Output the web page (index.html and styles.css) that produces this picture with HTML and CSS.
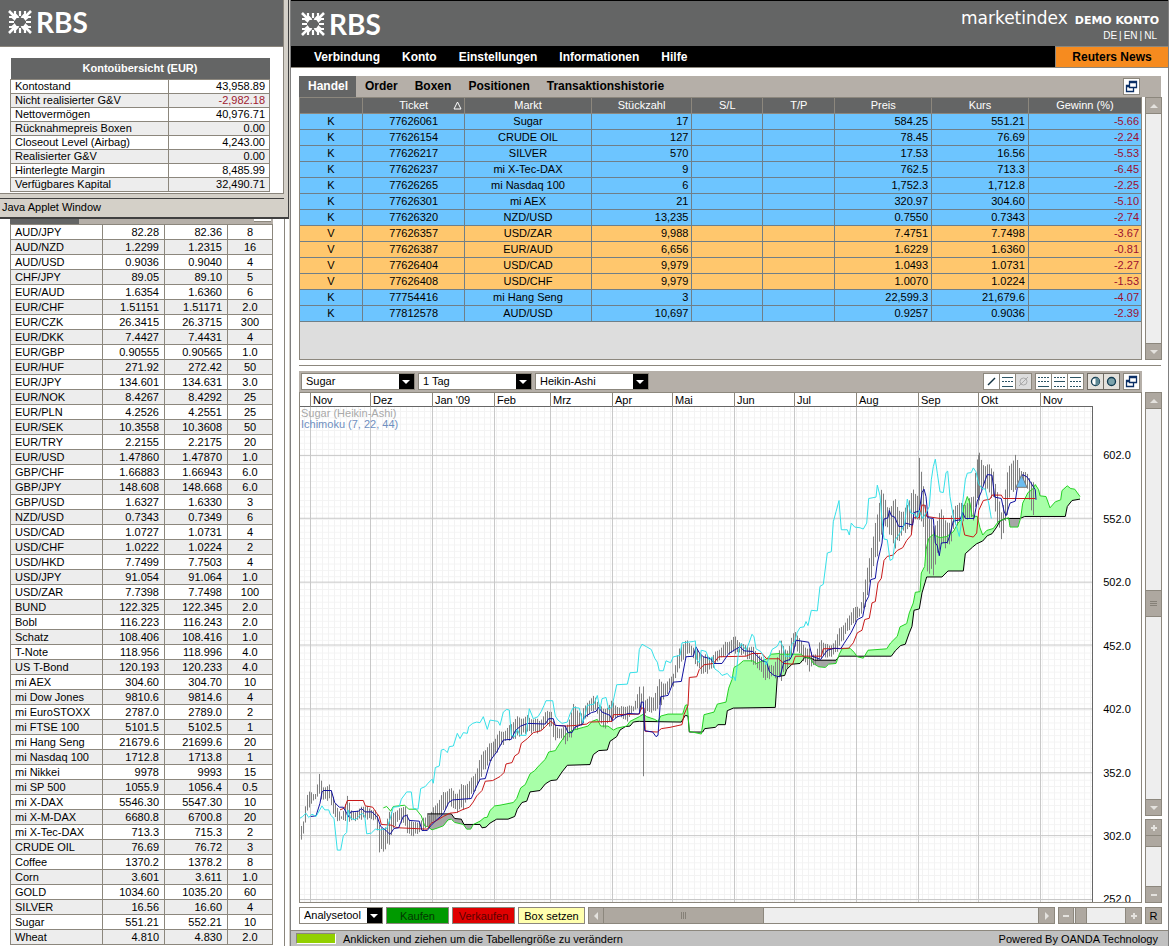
FILE: index.html
```html
<!DOCTYPE html>
<html lang="de">
<head>
<meta charset="utf-8">
<title>RBS marketindex</title>
<link rel="stylesheet" href="styles.css">
</head>
<body>
<svg class="defs" width="0" height="0" aria-hidden="true">
  <symbol id="daisy" viewBox="0 0 24 24">
    <g id="petals" fill="none" stroke="#fff" stroke-width="2.6">
      <path d="M1 1 8.500 8.500M23 1 15.500 8.500M1 23 8.500 15.500M23 23 15.500 15.500"/>
      <path d="M7 1V4L10.500 8M17 1V4L13.500 8M12 1V6M7 23V20L10.500 16M17 23V20L13.500 16M12 23V18" stroke-width="2.200"/>
      <path d="M1 7H4L8 10.500M1 17H4L8 13.500M1 12H6M23 7H20L16 10.500M23 17H20L16 13.500M23 12H18" stroke-width="2.200"/>
    </g>
    <path d="M9 8h6l2 2v4l-2 2H9l-2-2v-4z" fill="#646565"/>
  </symbol>
  <symbol id="windows" viewBox="0 0 15 15">
    <path d="M5.500 2.500h7v6h-7zM5 3.500h8M5 6.500H2.500v6h7V9M2 7.500h3" fill="none" stroke="#0b2f66" stroke-width="1.300"/>
  </symbol>
</svg>

<aside class="side">
  <section class="popup">
    <header class="brand"><svg class="daisy"><use href="#daisy"/></svg><span class="brand-name">RBS</span></header>
    <div class="popup-body">
      <table class="account">
        <colgroup><col><col class="amount"></colgroup>
        <thead><tr><th colspan="2">Kontoübersicht (EUR)</th></tr></thead>
        <tbody>
        <tr><td>Kontostand</td><td>43,958.89</td></tr>
        <tr><td>Nicht realisierter G&amp;V</td><td class="loss">-2,982.18</td></tr>
        <tr><td>Nettovermögen</td><td>40,976.71</td></tr>
        <tr><td>Rücknahmepreis Boxen</td><td>0.00</td></tr>
        <tr><td>Closeout Level (Airbag)</td><td>4,243.00</td></tr>
        <tr><td>Realisierter G&amp;V</td><td>0.00</td></tr>
        <tr><td>Hinterlegte Margin</td><td>8,485.99</td></tr>
        <tr><td>Verfügbares Kapital</td><td>32,490.71</td></tr>
        </tbody>
      </table>
    </div>
    <footer class="applet">Java Applet Window</footer>
  </section>
  <section class="quotes-window">
    <div class="quotes-strip"><span></span><i></i></div>
    <table class="quotes">
      <colgroup><col class="q-name"><col class="q-bid"><col class="q-ask"><col class="q-spread"></colgroup>
      <tbody>
      <tr><td>AUD/JPY</td><td>82.28</td><td>82.36</td><td>8</td></tr>
      <tr><td>AUD/NZD</td><td>1.2299</td><td>1.2315</td><td>16</td></tr>
      <tr><td>AUD/USD</td><td>0.9036</td><td>0.9040</td><td>4</td></tr>
      <tr><td>CHF/JPY</td><td>89.05</td><td>89.10</td><td>5</td></tr>
      <tr><td>EUR/AUD</td><td>1.6354</td><td>1.6360</td><td>6</td></tr>
      <tr><td>EUR/CHF</td><td>1.51151</td><td>1.51171</td><td>2.0</td></tr>
      <tr><td>EUR/CZK</td><td>26.3415</td><td>26.3715</td><td>300</td></tr>
      <tr><td>EUR/DKK</td><td>7.4427</td><td>7.4431</td><td>4</td></tr>
      <tr><td>EUR/GBP</td><td>0.90555</td><td>0.90565</td><td>1.0</td></tr>
      <tr><td>EUR/HUF</td><td>271.92</td><td>272.42</td><td>50</td></tr>
      <tr><td>EUR/JPY</td><td>134.601</td><td>134.631</td><td>3.0</td></tr>
      <tr><td>EUR/NOK</td><td>8.4267</td><td>8.4292</td><td>25</td></tr>
      <tr><td>EUR/PLN</td><td>4.2526</td><td>4.2551</td><td>25</td></tr>
      <tr><td>EUR/SEK</td><td>10.3558</td><td>10.3608</td><td>50</td></tr>
      <tr><td>EUR/TRY</td><td>2.2155</td><td>2.2175</td><td>20</td></tr>
      <tr><td>EUR/USD</td><td>1.47860</td><td>1.47870</td><td>1.0</td></tr>
      <tr><td>GBP/CHF</td><td>1.66883</td><td>1.66943</td><td>6.0</td></tr>
      <tr><td>GBP/JPY</td><td>148.608</td><td>148.668</td><td>6.0</td></tr>
      <tr><td>GBP/USD</td><td>1.6327</td><td>1.6330</td><td>3</td></tr>
      <tr><td>NZD/USD</td><td>0.7343</td><td>0.7349</td><td>6</td></tr>
      <tr><td>USD/CAD</td><td>1.0727</td><td>1.0731</td><td>4</td></tr>
      <tr><td>USD/CHF</td><td>1.0222</td><td>1.0224</td><td>2</td></tr>
      <tr><td>USD/HKD</td><td>7.7499</td><td>7.7503</td><td>4</td></tr>
      <tr><td>USD/JPY</td><td>91.054</td><td>91.064</td><td>1.0</td></tr>
      <tr><td>USD/ZAR</td><td>7.7398</td><td>7.7498</td><td>100</td></tr>
      <tr><td>BUND</td><td>122.325</td><td>122.345</td><td>2.0</td></tr>
      <tr><td>Bobl</td><td>116.223</td><td>116.243</td><td>2.0</td></tr>
      <tr><td>Schatz</td><td>108.406</td><td>108.416</td><td>1.0</td></tr>
      <tr><td>T-Note</td><td>118.956</td><td>118.996</td><td>4.0</td></tr>
      <tr><td>US T-Bond</td><td>120.193</td><td>120.233</td><td>4.0</td></tr>
      <tr><td>mi AEX</td><td>304.60</td><td>304.70</td><td>10</td></tr>
      <tr><td>mi Dow Jones</td><td>9810.6</td><td>9814.6</td><td>4</td></tr>
      <tr><td>mi EuroSTOXX</td><td>2787.0</td><td>2789.0</td><td>2</td></tr>
      <tr><td>mi FTSE 100</td><td>5101.5</td><td>5102.5</td><td>1</td></tr>
      <tr><td>mi Hang Seng</td><td>21679.6</td><td>21699.6</td><td>20</td></tr>
      <tr><td>mi Nasdaq 100</td><td>1712.8</td><td>1713.8</td><td>1</td></tr>
      <tr><td>mi Nikkei</td><td>9978</td><td>9993</td><td>15</td></tr>
      <tr><td>mi SP 500</td><td>1055.9</td><td>1056.4</td><td>0.5</td></tr>
      <tr><td>mi X-DAX</td><td>5546.30</td><td>5547.30</td><td>10</td></tr>
      <tr><td>mi X-M-DAX</td><td>6680.8</td><td>6700.8</td><td>20</td></tr>
      <tr><td>mi X-Tec-DAX</td><td>713.3</td><td>715.3</td><td>2</td></tr>
      <tr><td>CRUDE OIL</td><td>76.69</td><td>76.72</td><td>3</td></tr>
      <tr><td>Coffee</td><td>1370.2</td><td>1378.2</td><td>8</td></tr>
      <tr><td>Corn</td><td>3.601</td><td>3.611</td><td>1.0</td></tr>
      <tr><td>GOLD</td><td>1034.60</td><td>1035.20</td><td>60</td></tr>
      <tr><td>SILVER</td><td>16.56</td><td>16.60</td><td>4</td></tr>
      <tr><td>Sugar</td><td>551.21</td><td>552.21</td><td>10</td></tr>
      <tr><td>Wheat</td><td>4.810</td><td>4.830</td><td>2.0</td></tr>
      </tbody>
    </table>
  </section>
</aside>

<main class="main">
  <header class="top">
    <div class="brand"><svg class="daisy"><use href="#daisy"/></svg><span class="brand-name">RBS</span></div>
    <div class="product">
      <div class="product-line"><span class="product-name">marketindex</span><strong>DEMO KONTO</strong></div>
      <nav class="langs"><a href="#">DE</a>|<a href="#">EN</a>|<a href="#">NL</a></nav>
    </div>
  </header>
  <nav class="menu">
    <button>Verbindung</button><button>Konto</button><button>Einstellungen</button><button>Informationen</button><button>Hilfe</button>
    <button class="news">Reuters News</button>
  </nav>

  <div class="work">
    <div class="tabs">
      <button class="tab on">Handel</button><button class="tab">Order</button><button class="tab">Boxen</button><button class="tab">Positionen</button><button class="tab">Transaktionshistorie</button>
      <button class="tool detach" aria-label="Fenster lösen"><svg><use href="#windows"/></svg></button>
    </div>
    <div class="trades-row">
      <div class="trades-box">
        <table class="trades">
          <colgroup><col class="c1"><col class="c2"><col class="c3"><col class="c4"><col class="c5"><col class="c6"><col class="c7"><col class="c8"><col class="c9"></colgroup>
          <thead><tr><th></th><th class="sorted"><span>Ticket</span><svg width="9" height="9" viewBox="0 0 9 9"><path d="M4.500 1 8 8H1z" fill="none" stroke="#fff"/></svg></th><th>Markt</th><th>Stückzahl</th><th>S/L</th><th>T/P</th><th>Preis</th><th>Kurs</th><th>Gewinn (%)</th></tr></thead>
          <tbody>
          <tr><td>K</td><td>77626061</td><td>Sugar</td><td>17</td><td></td><td></td><td>584.25</td><td>551.21</td><td>-5.66</td></tr>
          <tr><td>K</td><td>77626154</td><td>CRUDE OIL</td><td>127</td><td></td><td></td><td>78.45</td><td>76.69</td><td>-2.24</td></tr>
          <tr><td>K</td><td>77626217</td><td>SILVER</td><td>570</td><td></td><td></td><td>17.53</td><td>16.56</td><td>-5.53</td></tr>
          <tr><td>K</td><td>77626237</td><td>mi X-Tec-DAX</td><td>9</td><td></td><td></td><td>762.5</td><td>713.3</td><td>-6.45</td></tr>
          <tr><td>K</td><td>77626265</td><td>mi Nasdaq 100</td><td>6</td><td></td><td></td><td>1,752.3</td><td>1,712.8</td><td>-2.25</td></tr>
          <tr><td>K</td><td>77626301</td><td>mi AEX</td><td>21</td><td></td><td></td><td>320.97</td><td>304.60</td><td>-5.10</td></tr>
          <tr><td>K</td><td>77626320</td><td>NZD/USD</td><td>13,235</td><td></td><td></td><td>0.7550</td><td>0.7343</td><td>-2.74</td></tr>
          <tr class="sell"><td>V</td><td>77626357</td><td>USD/ZAR</td><td>9,988</td><td></td><td></td><td>7.4751</td><td>7.7498</td><td>-3.67</td></tr>
          <tr class="sell"><td>V</td><td>77626387</td><td>EUR/AUD</td><td>6,656</td><td></td><td></td><td>1.6229</td><td>1.6360</td><td>-0.81</td></tr>
          <tr class="sell"><td>V</td><td>77626404</td><td>USD/CAD</td><td>9,979</td><td></td><td></td><td>1.0493</td><td>1.0731</td><td>-2.27</td></tr>
          <tr class="sell"><td>V</td><td>77626408</td><td>USD/CHF</td><td>9,979</td><td></td><td></td><td>1.0070</td><td>1.0224</td><td>-1.53</td></tr>
          <tr><td>K</td><td>77754416</td><td>mi Hang Seng</td><td>3</td><td></td><td></td><td>22,599.3</td><td>21,679.6</td><td>-4.07</td></tr>
          <tr><td>K</td><td>77812578</td><td>AUD/USD</td><td>10,697</td><td></td><td></td><td>0.9257</td><td>0.9036</td><td>-2.39</td></tr>
          </tbody>
        </table>
      </div>
      <div class="vbar"><button class="sq" aria-label="Nach oben"><i class="up"></i></button><div class="grow"></div><button class="sq" aria-label="Nach unten"><i class="down"></i></button></div>
    </div>
    <hr class="split">

    <div class="chart-grid">
      <div class="chart-tools">
        <label class="pick"><select aria-label="Markt"><option>Sugar</option></select></label>
        <label class="pick"><select aria-label="Intervall"><option>1 Tag</option></select></label>
        <label class="pick"><select aria-label="Darstellung"><option>Heikin-Ashi</option></select></label>
        <div class="tool-group first">
          <button class="tool" aria-label="Linie"><svg viewBox="0 0 15 15"><path d="M4 11 11 4" stroke="#103040" stroke-width="1.500"/></svg></button>
          <button class="tool" aria-label="Horizontale"><svg viewBox="0 0 15 15"><path d="M2 3.500h11M2 12.500h11" stroke="#2d5565"/><path d="M2 7.500h11" stroke="#2d5565" stroke-dasharray="2 1"/></svg></button>
          <button class="tool off" aria-label="Löschen"><svg viewBox="0 0 15 15"><circle cx="7.500" cy="7.500" r="3.500" fill="none" stroke="#aaa"/><path d="M3 12 12 3" stroke="#aaa"/></svg></button>
        </div>
        <div class="tool-group">
          <button class="tool" aria-label="Raster 1"><svg viewBox="0 0 15 15"><path d="M2 3.500h11M2 7.500h11" stroke="#2d5565" stroke-dasharray="2 1"/><path d="M2 12.500h11" stroke="#2d5565"/></svg></button>
          <button class="tool" aria-label="Raster 2"><svg viewBox="0 0 15 15"><path d="M2 3.500h11M2 12.500h11" stroke="#2d5565" stroke-dasharray="2 1"/><path d="M2 7.500h11" stroke="#2d5565"/></svg></button>
          <button class="tool" aria-label="Raster 3"><svg viewBox="0 0 15 15"><path d="M2 7.500h11M2 12.500h11" stroke="#2d5565" stroke-dasharray="2 1"/><path d="M2 3.500h11" stroke="#2d5565"/></svg></button>
        </div>
        <div class="tool-group dark">
          <button class="tool" aria-label="Kontrast"><svg viewBox="0 0 15 15"><circle cx="7.500" cy="7.500" r="4" fill="#fff" stroke="#103a50" stroke-width="1.300"/><path d="M7.500 3.500a4 4 0 0 1 0 8z" fill="#5f8894"/></svg></button>
          <button class="tool" aria-label="Füllung"><svg viewBox="0 0 15 15"><circle cx="7.500" cy="7.500" r="4" fill="#7da3ac" stroke="#103a50" stroke-width="1.300"/></svg></button>
        </div>
        <div class="tool-group"><button class="tool" aria-label="Fenster lösen"><svg><use href="#windows"/></svg></button></div>
      </div>

      <div class="chart">
        <div class="plot-col">
          <div class="months"><span></span><span>Nov</span><span>Dez</span><span>Jan '09</span><span>Feb</span><span>Mrz</span><span>Apr</span><span>Mai</span><span>Jun</span><span>Jul</span><span>Aug</span><span>Sep</span><span>Okt</span><span>Nov</span></div>
          <div class="plot">
            <svg id="plot" viewBox="300 407 792 496" preserveAspectRatio="none" role="img" aria-label="Kursverlauf Sugar">
              <defs><pattern id="fine" x="304" y="411" width="6" height="6.370" patternUnits="userSpaceOnUse"><path d="M0 .5H6M.5 0V7" stroke="#f3f3f3"/></pattern></defs>
              <rect x="300" y="407" width="792" height="496" fill="url(#fine)"/>
              <path class="grid" d="M310.500 407V903M370.500 407V903M432.500 407V903M494.500 407V903M550.500 407V903M612.500 407V903M672.500 407V903M734.500 407V903M794.500 407V903M856.500 407V903M918.500 407V903M978.500 407V903M1040.500 407V903M300 455.500H1092M300 518.500H1092M300 582.500H1092M300 645.500H1092M300 709.500H1092M300 773.500H1092M300 836.500H1092M300 900.500H1092"/>
            </svg>
            <div class="legend"><span>Sugar (Heikin-Ashi)</span><span class="ichi">Ichimoku (7, 22, 44)</span></div>
          </div>
        </div>
        <div class="prices"><span></span><span>602.0</span><span>552.0</span><span>502.0</span><span>452.0</span><span>402.0</span><span>352.0</span><span>302.0</span><span>252.0</span></div>
      </div>

      <div class="chart-bars">
        <div class="vbar long"><button class="sq" aria-label="Nach oben"><i class="up"></i></button><div class="before"></div><div class="thumb"><i class="grip"></i></div><div class="after"></div><button class="sq" aria-label="Nach unten"><i class="down"></i></button></div>
        <div class="vbar zoom"><button class="sq" aria-label="Vergrößern"><i class="plus"></i></button><div class="thumb small"></div><div class="grow"></div><button class="sq" aria-label="Verkleinern"><i class="minus"></i></button></div>
      </div>

      <div class="actions">
        <label class="pick tight"><select aria-label="Analysetool"><option>Analysetool</option></select></label>
        <button class="act buy">Kaufen</button>
        <button class="act sellb">Verkaufen</button>
        <button class="act box">Box setzen</button>
        <div class="hbar scroll"><button class="sq" aria-label="Nach links"><i class="left"></i></button><div class="thumb wide"><i class="grip v"></i></div><div class="rest"></div><button class="sq" aria-label="Nach rechts"><i class="right"></i></button></div>
        <div class="hbar hzoom"><button class="sq" aria-label="Verkleinern"><i class="minus"></i></button><div class="thumb short"></div><div class="rest"></div><button class="sq" aria-label="Vergrößern"><i class="plus"></i></button></div>
      </div>
      <button class="reset">R</button>
    </div>
  </div>

  <footer class="status"><i class="led"></i><span>Anklicken und ziehen um die Tabellengröße zu verändern</span><span class="powered">Powered By OANDA Technology</span></footer>
</main>
<script src="chart.js"></script>
</body>
</html>
```
FILE: styles.css
```css
* { box-sizing: border-box; }
body {
  margin: 0;
  display: flex;
  min-height: 100vh;
  background: #fff;
  color: #000;
  font: 11px/14px "Liberation Sans", Arial, sans-serif;
}
.defs { position: absolute; }
button, select { font: inherit; color: inherit; margin: 0; padding: 0; border: 0; background: none; border-radius: 0; }
table { border-collapse: collapse; table-layout: fixed; }
td, th { padding: 0; overflow: hidden; white-space: nowrap; }

/* brand */
.brand { display: flex; align-items: center; gap: 4px; color: #fff; }
.daisy { width: 24px; height: 24px; }
.brand-name { font: bold 28px/32px Lato, sans-serif; }

/* left windows */
.side { flex: none; width: 290px; display: flex; flex-direction: column; border-right: 1px solid #d4d0c8; background: #fff; }
.popup { border-right: 1px solid #404040; border-bottom: 2px solid #404040; background: #d4d0c8; padding-right: 4px; }
.popup .brand { height: 47px; padding: 0 8px 2px; background: #646565; border-bottom: 1px solid #8a857c; border-right: 1px solid #8a857c; }
.popup-body { background: #fff; padding: 11px 13px 1px 10px; border: solid #8a857c; border-width: 0 1px 1px 0; }
.account { width: 100%; }
.account th { height: 21px; background: #646565; color: #fff; font-size: 11px; }
.account td { height: 14px; line-height: 13px; border: 1px solid #8c877d; padding: 0 4px; }
.amount { width: 101px; }
.account td:last-child { text-align: right; }
.account tbody tr:nth-child(even) td { background: #ededed; }
.account td.loss { color: #a02030; }
.applet { margin-top: 4px; border-top: 1px solid #404040; padding: 1px 2px; height: 19px; }

.quotes-window { flex: 1; padding: 0 11px 0 10px; margin-right: 4px; border-right: 1px solid #8a857c; }
.quotes-strip { height: 5px; display: flex; justify-content: space-between; background: #b5afa8; width: 263px; }
.quotes-strip span { width: 69px; background: #646565; }
.quotes-strip i { width: 17px; height: 3px; margin-right: 2px; background: #fff; border-bottom: 1px solid #8c877d; }
.quotes { width: 262px; }
.q-name { width: 92px; } .q-bid { width: 62px; } .q-ask { width: 63px; } .q-spread { width: 45px; }
.quotes td { height: 15px; line-height: 14px; border: 1px solid #8c877d; padding: 0 5px; text-align: right; }
.quotes td:first-child { text-align: left; padding-left: 4px; }
.quotes td:last-child { text-align: center; }
.quotes tr:nth-child(even) td { background: #ededed; }

/* main window */
.main { flex: 1; min-width: 0; display: flex; flex-direction: column; border-left: 1px solid #808080; border-right: 1px solid #808080; }
.top { display: flex; justify-content: space-between; height: 46px; background: #646565; border-top: 1px solid #000; padding: 0 9px 0 10px; }
.product { text-align: right; color: #fff; padding-top: 6px; }
.product-line { display: flex; align-items: baseline; gap: 7px; height: 22px; }
.product-name { font: 17px/22px "DejaVu Sans", sans-serif; }
.product strong { font: bold 11px/14px "DejaVu Sans", sans-serif; }
.langs { font-size: 10px; line-height: 14px; }
.langs a { color: #fff; text-decoration: none; padding: 0 2px; }
.menu { display: flex; height: 22px; background: #000; border-bottom: 1px solid #8c877d; color: #fff; font: bold 12px/20px "Liberation Sans", Arial, sans-serif; padding-left: 23px; gap: 22px; }
.menu .news { margin-left: auto; width: 113px; background: #f68b1f; color: #000; border-left: 1px solid #8c877d; border-top: 1px solid #8c877d; }
.work { flex: 1; display: flex; flex-direction: column; padding: 8px 6px 6px 8px; }

.tabs { display: flex; height: 21px; margin-right: 1px; background: #b5afa8; }
.tab { font: bold 12px/21px "Liberation Sans", Arial, sans-serif; padding: 0 8px 0 9px; }
.tab.on { background: #646565; color: #fff; }
.tool { flex: none; width: 17px; height: 17px; background: #fff; border: 1px solid #8c877d; margin-left: -1px; }
.tabs .detach { margin: 2px 21px 2px auto; }
.tool svg { display: block; width: 15px; height: 15px; }
.tool.off { background: #ddd; }

.trades-row { display: grid; grid-template-columns: 1fr 17px; gap: 3px; }
.trades-box { height: 263px; background: #ddd; border: 1px solid #8c877d; border-top: 0; }
.trades { width: 100%; }
.c1 { width: 61px; } .c2 { width: 12.200%; } .c3 { width: 15%; } .c4 { width: 12%; } .c5 { width: 8.400%; }
.c6 { width: 8.600%; } .c7 { width: 11.500%; } .c8 { width: 11.500%; } .c9 { width: 13.400%; }
.trades th { height: 16px; line-height: 15px; background: #646565; color: #fff; font-weight: normal; border: 1px solid #8c877d; border-left: 0; }
.trades th:last-child, .trades td:last-child { border-right: 0; }
.sorted svg { float: right; margin: 3px 2px 0 -11px; }
.trades td { height: 16px; line-height: 15px; background: #6dc5ff; border: solid #6f7f88; border-width: 0 1px 1px 0; text-align: right; padding: 0 3px; }
.trades td:nth-child(-n+3) { text-align: center; }
.trades td:last-child { color: #9c1030; padding-right: 2px; }
.trades .sell td { background: #ffc76d; }
.split { width: calc(100% - 1px); height: 1px; margin: 5px 0; border: 0; background: #8c877d; }

/* scroll bars */
.vbar, .hbar { display: flex; background: #eee; border: 1px solid #8c877d; }
.vbar { flex-direction: column; width: 17px; }
.sq { flex: none; width: 15px; height: 15px; background: #aea8a0; display: grid; place-items: center; }
.vbar .sq:first-child { border-bottom: 1px solid #8c877d; height: 16px; }
.vbar .sq:last-child { border-top: 1px solid #8c877d; height: 16px; }
.hbar .sq:first-child { border-right: 1px solid #8c877d; }
.hbar .sq:last-child { border-left: 1px solid #8c877d; width: 16px; }
.grow { flex: 1; }
.thumb { background: #aea8a0; border: 1px solid #8c877d; display: grid; place-items: center; }
.vbar .thumb { border-width: 1px 0; height: 27px; }
.vbar .thumb.small { height: 11px; border-top: 0; }
.hbar .thumb { border-width: 0 1px 0 0; }
.before { flex: 182; } .after { flex: 183; }
.up, .down { border: 4px solid transparent; border-top-width: 0; border-bottom-color: #e4e2de; }
.down { border-width: 4px 4px 0; border-top-color: #e4e2de; }
.left, .right { border: 4px solid transparent; border-left-width: 0; border-right-color: #e4e2de; }
.right { border-width: 4px 0 4px 4px; border-left-color: #e4e2de; }
.minus, .plus { width: 6px; height: 2px; background: #e4e2de; }
.plus { height: 6px; background: linear-gradient(#e4e2de, #e4e2de) center / 2px 6px no-repeat, linear-gradient(#e4e2de, #e4e2de) center / 6px 2px no-repeat; }
.grip { width: 7px; height: 5px; background: repeating-linear-gradient(#858077 0 1px, transparent 1px 2px); }
.grip.v { width: 5px; height: 7px; background: repeating-linear-gradient(90deg, #858077 0 1px, transparent 1px 2px); }

/* chart */
.chart-grid { flex: 1; display: grid; grid-template: 21px 1fr 17px / 1fr 17px; column-gap: 3px; }
.chart-tools { grid-area: 1 / 1; display: flex; align-items: center; gap: 3px; background: #b5afa8; padding: 0 2px; }
.pick { position: relative; display: block; width: 114px; height: 17px; flex: none; background: #000; border: 1px solid #8c877d; }
.pick select { appearance: none; display: block; width: calc(100% - 15px); height: 15px; background: #fff; padding-left: 4px; line-height: 15px; }
.pick::after { content: ""; position: absolute; right: 4px; top: 6px; border: 4px solid transparent; border-top-color: #fff; border-bottom: 0; pointer-events: none; }
.pick.tight { width: 84px; }
.tool-group { display: flex; padding-left: 1px; }
.tool-group.first { margin-left: auto; }
.tool-group.dark .tool { border-color: #6f6a62; background: #e4e1dc; }
.chart { grid-area: 2 / 1; display: flex; margin-bottom: 4px; border: 1px solid #8c877d; }
.plot-col { flex: 793; min-width: 0; display: flex; flex-direction: column; }
.months { display: grid; grid-template-columns: 10fr 60fr 62fr 62fr 56fr 62fr 60fr 62fr 60fr 62fr 62fr 60fr 62fr 53fr; height: 14px; line-height: 14px; border-bottom: 1px solid #666; }
.months span { border-left: 1px solid #8c877d; padding-left: 2px; min-width: 0; }
.months span:first-child { border: 0; padding: 0; }
.plot { flex: 1; position: relative; min-height: 300px; border-right: 1px solid #666; }
.plot svg { position: absolute; inset: 0; width: 100%; height: 100%; shape-rendering: crispEdges; }
.legend { position: relative; display: flex; flex-direction: column; color: #a9a9a9; line-height: 11px; padding: 1px; }
.ichi { color: #6f8fc0; }
.grid { stroke: #c8c8c8; fill: none; }
.bars { stroke: #808080; fill: none; }
.cloud { fill: #a8ffa8; }
.cloud-down { fill: #a6a6a6; }
.line { fill: none; stroke-width: 1px; }
.lag { stroke: #35e0e8; }
.fast { stroke: #1010a0; }
.slow { stroke: #c81818; }
.span-a { stroke: #25d025; }
.span-b { stroke: #000; }
.marker { fill: #6cbcf0; stroke: #777; }
.prices {
  contain: size;
  flex: 0 0 48px;
  display: grid;
  grid-template-rows: 17fr 63fr 64fr 64fr 63fr 64fr 64fr 63fr minmax(0, 35fr);
  align-items: center;
  justify-items: center;
  padding-top: 14px;
  overflow: hidden;
}
.prices span:last-child { align-self: start; padding-top: 25px; }
.chart-bars { grid-area: 2 / 2; display: flex; flex-direction: column; gap: 3px; padding-bottom: 4px; }
.chart-bars .long { flex: 1; }
.chart-bars .zoom { height: 84px; }
.actions { grid-area: 3 / 1; display: flex; gap: 3px; }
.act { width: 63px; height: 17px; border: 1px solid #8c877d; }
.buy { background: #009a00; color: #003800; }
.sellb { background: #e00000; color: #5c0000; }
.box { width: 67px; background: #ffffae; }
.scroll { flex: 1; }
.thumb.wide { flex: 160; }
.scroll .rest { flex: 275; }
.hzoom { width: 84px; }
.hzoom .thumb { width: 12px; margin-left: 1px; border-left-width: 1px; }
.hzoom .rest { flex: 1; }
.reset { grid-area: 3 / 2; width: 17px; background: #aea8a0; border: 1px solid #8c877d; }

.status { display: flex; align-items: center; gap: 7px; height: 16px; background: #c0c0c0; border-top: 1px solid #8c877d; padding: 0 10px 0 5px; }
.led { width: 40px; height: 11px; background: #92d000; border: 1px solid #8c877d; border-color: #8c877d #fff #fff #8c877d; }
.powered { margin-left: auto; }
```
FILE: chart.js
```js
// Each series is a list of tiles: origin x, origin y, then points in thirds of a unit.
const A = [290, 740], B = [400, 630], C = [580, 600], D = [780, 440];

const series = {
  lag: [
    [A, "30,237 38,232 48,222 56,235 66,225 78,232 96,200 104,212 116,212 122,228 132,238 142,333 152,333 160,290 170,280 174,212 182,238 196,242 206,232 216,222 224,230 230,284 244,282 256,270 272,272 290,268 300,240 310,204 328,202"],
    [B, "4,510 20,488 34,488 40,538 54,540 62,478 76,472 84,462 96,450 100,462 106,415 118,410 124,362 132,360 142,370 148,352 160,350 172,312 180,328 190,310 202,312 206,292 218,282 230,278 240,280 250,262 262,300 270,272 294,276 300,288 310,248 320,240 328,242 334,318 344,322 352,300 360,318 378,318 388,238 400,268 414,262 424,246 432,228 438,214 458,214 466,260 474,272 486,282 502,278 510,254 520,234 538,236 548,280 554,262 562,228 582,224 592,198 600,240 606,208 618,204 626,240 636,232 642,204 650,166 682,164 690,130 712,128"],
    [C, "178,150 186,134 200,142 214,150 224,176 232,188 238,214 250,214 258,184 272,190 280,172 300,168 306,130 340,126 346,124 350,180 358,190 364,152 378,156 388,182 396,172 404,208 418,218 426,228 442,222 452,234 462,232 466,244 470,212 476,150 484,132 498,152 508,128 516,104 522,112 528,148 542,156 550,170 558,196 566,178 576,150 592,140"],
    [D, "0,604 8,620 16,650 30,650 36,612 44,606 52,578 60,564 72,562 78,546 84,558 94,512 112,514 120,440 130,434 142,340 154,336 160,246 168,216 177,182 184,270 202,270 208,286 214,250 224,262 240,264 250,268 260,250 266,176 288,172 292,136 300,168 306,240 312,298 322,300 330,362 338,358 346,300 360,280 374,252 382,178 392,220 404,222 412,234 418,212 428,236 440,216 448,200 454,120 460,80 466,58 472,100 480,156 490,158 498,98 503,94 510,170 520,230 530,262 538,290 544,252 548,188 556,120 562,100 574,98 580,84 588,96 596,132 606,146 616,148 626,190 634,236"]
  ],
  fast: [
    [A, "62,232 78,230 90,192 96,158 100,154 124,154 134,190 148,204 160,204 170,222 174,234 182,218 206,216 214,208 226,218 246,218 262,234 272,262 290,276 300,286 312,268 326,266"],
    [B, "2,580 10,562 20,558 28,574 58,576 66,604 82,604 92,590 108,574 122,562 132,550 146,520 158,512 214,508 226,480 240,450 256,448 272,392 290,368 310,332 334,330 346,304 362,290 384,282 436,284 446,268 460,268 466,288 496,290 504,310 516,310 524,294 548,284 552,264 574,250 588,246 596,234 606,248 630,258 638,274 652,262 676,256 684,252 714,254"],
    [C, "178,342 184,308 190,308 194,394 218,398 228,412 234,408 242,292 264,288 280,248 304,246 318,172 340,170 348,142 358,160 370,172 392,178 402,192 426,192 446,162 466,150 480,142 492,154 518,156 530,168 546,184 560,188 568,216 582,228 598,232"],
    [D, "0,712 12,666 30,660 40,640 48,602 86,608 96,650 122,660 142,632 164,626 182,628 192,612 214,578 232,540 248,532 256,490 266,470 272,420 286,416 292,370 306,310 312,238 324,234 328,212 334,228 344,232 356,260 370,260 376,250 398,256 402,218 418,214 426,158 432,148 438,170 444,234 460,236 466,310 472,318 478,348 484,310 502,308 508,292 520,244 540,240 548,218 556,236 582,236 592,184 604,156 616,120 622,104 636,106 644,172 664,176 672,214 678,228 690,190 706,184 712,144 728,104 742,112 752,128 766,150 768,180"]
  ],
  slow: [
    [A, "150,212 164,206 172,184 220,184 226,200 248,204 260,222 268,232 274,256 304,258 316,264"],
    [B, "0,596 82,600 94,582 110,574 130,562 150,552 170,550 186,542 208,534 220,518 230,500 246,484 256,456 278,454 300,442 312,430 318,404 336,400 344,380 356,372 364,342 382,328 400,310 424,304 436,292 452,276 466,288 500,290 530,288 560,284 568,278 636,276 640,256 716,254"],
    [C, "178,344 184,326 192,326 196,396 232,398 244,388 270,384 306,376 312,346 324,318 328,234 350,232 358,210 372,196 400,192 416,172 498,170 516,162 546,162 560,178 598,178"],
    [D, "0,662 12,672 38,674 46,650 92,650 124,650 130,628 206,626 220,610 232,580 246,572 254,540 268,536 276,490 286,486 294,430 304,416 312,362 322,350 340,346 352,332 368,324 380,302 394,286 400,234 418,234 426,196 434,196 440,230 480,236 544,236 554,286 580,292 590,280 596,212 610,182 630,178 636,166 664,166 670,176 766,176"]
  ],
  lead: [[A, "280,206 290,202 302,216 310,202 344,198 356,210 378,210 394,230 404,260 411,262"]],
  "span-a": [
    [B, "82,592 96,602 114,596 130,590 144,572 154,570 164,580 190,586 200,600 212,600 220,586 240,576 252,566 262,564 270,544 284,530 300,528 340,520 350,508 362,476 376,466 390,434 404,424 418,408 436,390 446,368 466,364 478,344 500,312 520,302 550,294 564,290 576,276 592,270 602,290 624,290 640,302 652,296 680,290 690,276 714,264"],
    [C, "178,352 190,344 200,352 224,360 234,366 242,350 264,344 308,344 316,318 322,316 328,396 364,404 372,346 402,338 412,314 438,308 446,266 456,240 462,204 476,196 490,184 518,184 530,192 548,184 560,178 574,164 598,162"],
    [D, "0,644 62,644 74,652 92,658 100,672 116,682 136,684 146,674 168,672 178,644 186,628 210,626 222,638 232,652 250,656 264,632 320,628 332,610 352,590 360,562 380,552 388,520 400,490 406,458 420,456 424,400 434,380 438,330 446,296 460,284 480,294 500,290 520,276 534,250 546,238 552,200 562,170 570,190 576,228 592,230 600,264 608,286 620,272 640,266 656,244 686,234 690,262 714,262 722,234 728,190 744,158 758,148 766,134 776,150 780,168 798,170 810,204 826,186 842,180 846,152 862,138 872,146 884,148 900,170"]
  ],
  "span-b": [
    [B, "82,554 154,554 164,568 184,570 192,586 240,586 246,596 258,594 270,582 290,570 324,570 344,562 352,540 366,520 380,516 390,488 420,484 436,464 452,454 470,452 486,428 502,408 570,406 580,376 596,364 622,362 630,336 650,322 660,302 676,292 690,290 700,278 714,276"],
    [C, "178,366 304,368 316,348 324,350 328,398 368,398 374,388 406,384 414,376 436,376 442,334 460,326 586,324 592,232"],
    [D, "0,710 14,708 20,690 36,674 60,672 74,654 94,656 104,662 168,662 178,650 334,650 346,634 362,618 376,614 388,580 396,560 402,512 418,508 426,460 440,412 486,412 504,394 550,394 556,342 578,322 590,312 608,304 622,288 636,282 650,262 660,244 676,236 720,236 734,230 856,230 862,200 876,182 900,178"]
  ]
};

// Daily ranges at turning points: x, high, low.
const ranges = [
  [A, "34,265,308 42,240,280 48,180,240 54,155,215 64,160,195 76,165,180 88,105,170 100,140,185 118,138,180 130,165,220 140,200,250 155,232,240 172,170,250 185,212,245 200,220,245 216,196,238 236,205,240 260,215,245 268,250,342 286,270,335 300,200,310 314,225,260 330,200,245"],
  [B, "18,535,595 25,560,620 40,580,622 60,575,610 90,555,590 110,520,570 130,490,550 148,475,525 170,490,550 188,465,540 210,455,505 230,420,480 250,360,430 270,345,400 300,305,355 320,300,335 345,265,330 380,260,310 420,272,310 440,245,285 458,240,300 462,290,338 480,295,325 500,290,345 520,225,310 545,250,290 565,210,260 585,200,240 610,240,300 636,215,275 660,235,260 680,225,280 700,232,245 718,172,240 730,210,250 760,200,250 780,150,235 800,160,195 820,130,170"],
  [C, "300,140,200 316,122,175 330,130,160 350,150,200 370,165,228 395,170,210 415,150,185 435,130,170 465,110,160 490,135,165 515,140,190 540,165,215 556,190,245 580,200,230 605,130,240 625,150,200 644,85,145 660,120,165 688,150,212 705,165,195 724,118,175 750,140,175 770,115,160"],
  [D, "180,560,620 200,545,580 220,500,555 240,505,530 256,425,505 272,325,420 290,240,350 304,130,300 320,200,260 346,180,330 370,220,280 394,155,270 415,160,230 419,50,260 430,140,250 438,190,400 460,260,410 480,210,320 510,250,320 524,190,260 560,190,240 582,160,240 588,60,200 600,45,170 612,70,140 640,80,180 650,150,240 666,215,305 680,120,240 690,65,170 706,45,140 720,85,130 740,100,140 760,120,240"]
];

function unpack(tiles) {
  return tiles.flatMap(([[ox, oy], text]) =>
    text.split(" ").map(p => {
      const [x, ...ys] = p.split(",").map(Number);
      return [ox + x / 3, ...ys.map(y => oy + y / 3)];
    }));
}

const plot = document.getElementById("plot");
function draw(d, cls) {
  const el = document.createElementNS("http://www.w3.org/2000/svg", "path");
  el.setAttribute("d", d);
  el.setAttribute("class", cls);
  plot.append(el);
}
const toPath = pts => "M" + pts.map(p => p.map(v => v.toFixed(1)).join(" ")).join("L");
const between = (pts, a, b) => pts.filter(p => p[0] >= a && p[0] <= b);
function cloud(a, b, cls) {
  const top = between(unpack(series["span-a"]), a, b);
  const bottom = between(unpack(series["span-b"]), a, b).reverse();
  draw(toPath([...top, ...bottom]) + "Z", cls);
}

cloud(400, 1100, "cloud");
cloud(427, 479, "cloud-down");
cloud(811, 839, "cloud-down");
draw("M1008 518H1020L1018 527H1010Z", "cloud-down");

// One bar every two units, interpolated between the turning points.
const range = unpack(ranges);
let bars = "M643.500 687V777M919.500 458V520M978.500 455V505M1015.500 455V490", i = 0;
for (let x = 301.500; x < 1034; x += 2) {
  while (i < range.length - 2 && range[i + 1][0] < x) i++;
  const [x0, h0, l0] = range[i], [x1, h1, l1] = range[i + 1];
  const t = Math.min(1, Math.max(0, (x - x0) / (x1 - x0)));
  const hi = h0 + (h1 - h0) * t, lo = l0 + (l1 - l0) * t, span = lo - hi;
  const n = Math.abs(Math.sin(x * 12.900)), m = Math.abs(Math.sin(x * 7.300));
  bars += `M${x} ${(hi + span * 0.200 * (n - 0.400)).toFixed(1)}V${(lo - span * 0.200 * (m - 0.400)).toFixed(1)}`;
}
draw(bars, "bars");

draw(toPath(unpack(series["span-b"])), "line span-b");
draw(toPath(unpack(series["span-a"])), "line span-a");
draw(toPath(unpack(series.lead)), "line span-a");
draw(toPath(unpack(series.slow)), "line slow");
draw(toPath(unpack(series.fast)), "line fast");
draw(toPath(unpack(series.lag)), "line lag");
draw("M1021.500 475 1027 487.500H1016Z", "marker");
draw("M427.500 815V827", "bars");
```
